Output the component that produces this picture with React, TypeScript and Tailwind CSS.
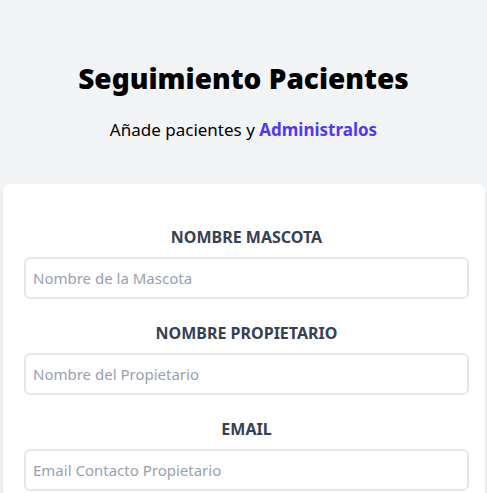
export default function App() {
  const fields = [
    { label: "Nombre Mascota", ph: "Nombre de la Mascota", type: "text" },
    { label: "Nombre Propietario", ph: "Nombre del Propietario", type: "text" },
    { label: "Email", ph: "Email Contacto Propietario", type: "email" },
  ];
  return (
    <div
      className="min-h-screen bg-gray-100 pt-[60px]"
      style={{ fontFamily: '"Noto Sans", "Open Sans", sans-serif' }}
    >
      <h2 className="text-center text-[28px] font-black leading-9 text-black">Seguimiento Pacientes</h2>
      <p className="mt-5 mb-10 text-center text-[17px] leading-7 text-black">
        Añade pacientes y <span className="font-bold text-indigo-600">Administralos</span>
      </p>
      <form className="ml-[3px] mr-[2px] rounded-lg bg-white pt-[41px] pb-10 pl-[21px] pr-[16px] shadow-md">
        {fields.map((f, i) => (
          <div key={f.label} className={i < fields.length - 1 ? "mb-[22px]" : ""}>
            <label className="block text-center text-base font-bold uppercase leading-6 text-gray-700">
              {f.label}
            </label>
            <input
              type={f.type}
              placeholder={f.ph}
              className="mt-2 block h-[42px] w-full rounded-md border-2 border-gray-200 px-[7px] text-[15px] text-gray-700 placeholder-gray-400 outline-none"
            />
          </div>
        ))}
      </form>
    </div>
  );
}
